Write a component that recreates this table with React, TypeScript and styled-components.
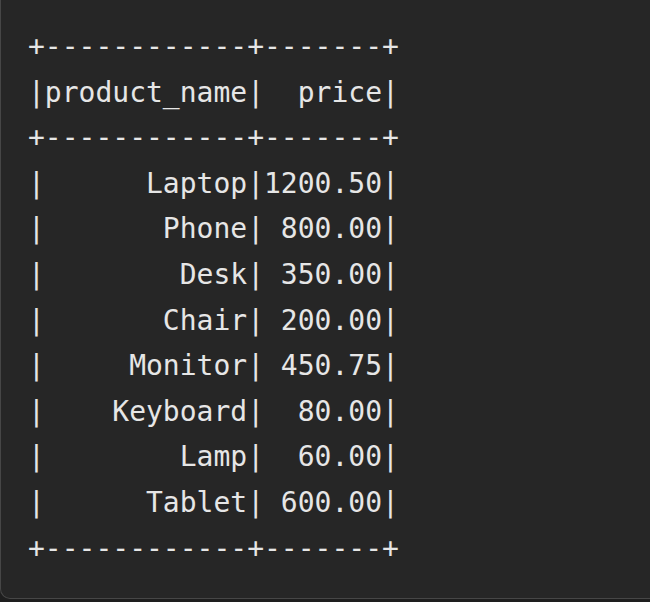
import React from "react";
import styled, { createGlobalStyle } from "styled-components";

const BackDark = "#262626";
const PageDark = "#1e1e1e";
const EdgeGray = "#464646";
const TextWhite = "#e6e6e6";

const GlobalStyle = createGlobalStyle`
  html, body {
    margin: 0;
    padding: 0;
    background: ${PageDark};
    overflow: hidden;
  }
`;

const Page = styled.div`
  width: 650px;
  height: 602px;
  overflow: hidden;
`;

const OutputBlock = styled.div`
  box-sizing: border-box;
  width: 680px;
  height: 599px;
  background: ${BackDark};
  border-left: 1px solid ${EdgeGray};
  border-bottom: 1px solid ${EdgeGray};
  border-bottom-left-radius: 10px;
  padding: 24px 0 0 27px;
`;

const OutputText = styled.pre`
  margin: 0;
  font-family: "DejaVu Sans Mono", "Liberation Mono", monospace;
  font-size: 28px;
  line-height: 45.6px;
  color: ${TextWhite};
  white-space: pre;
`;

const rows: [string, string][] = [
  ["Laptop", "1200.50"],
  ["Phone", "800.00"],
  ["Desk", "350.00"],
  ["Chair", "200.00"],
  ["Monitor", "450.75"],
  ["Keyboard", "80.00"],
  ["Lamp", "60.00"],
  ["Tablet", "600.00"],
];

export default function App() {
  const sep = "+------------+-------+";
  const header = "|product_name|  price|";
  const body = rows.map(([name, price]) => `|${name.padStart(12)}|${price.padStart(7)}|`);
  const text = [sep, header, sep, ...body, sep].join("\n");

  return (
    <Page>
      <GlobalStyle />
      <OutputBlock>
        <OutputText>{text}</OutputText>
      </OutputBlock>
    </Page>
  );
}
